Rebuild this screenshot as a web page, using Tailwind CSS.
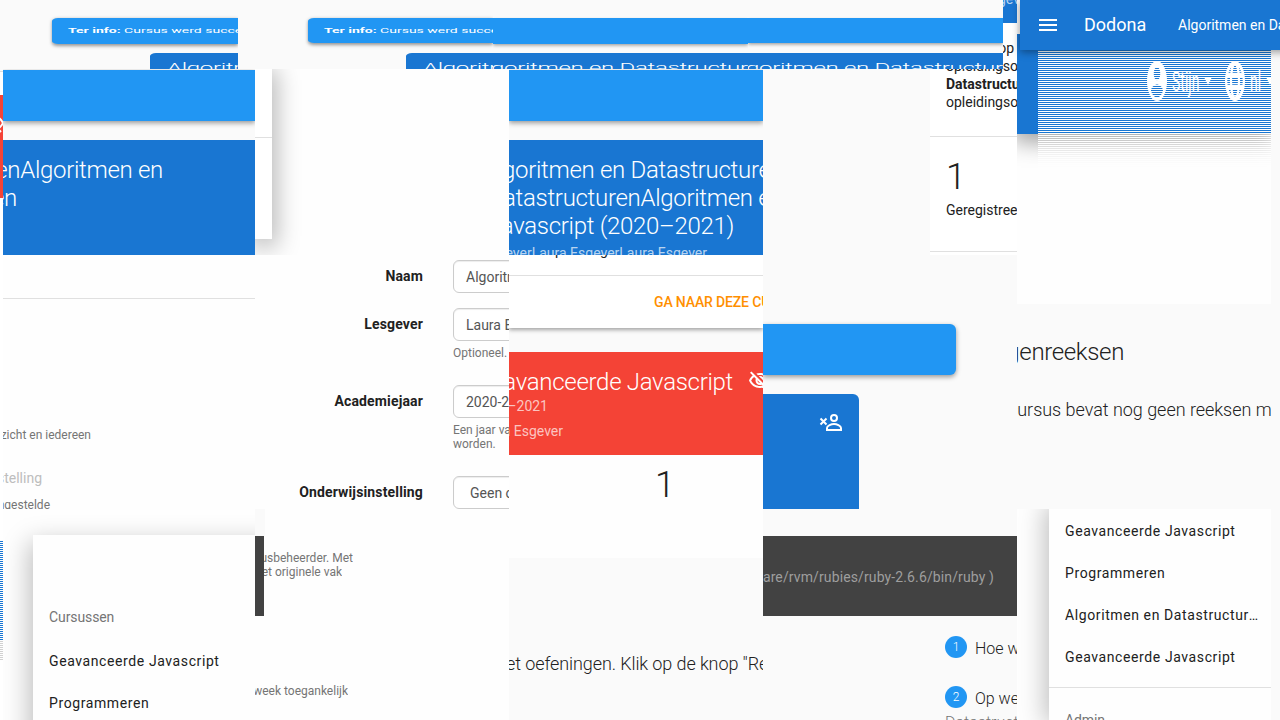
<!DOCTYPE html>
<html lang="nl">
<head>
<meta charset="utf-8">
<title>Dodona</title>
<script src="https://cdn.jsdelivr.net/npm/@tailwindcss/browser@4"></script>
</head>
<body class="bg-[#fafafa]">
<div class="relative flex h-[720px] w-[1280px] flex-col overflow-hidden bg-[#fafafa] font-['Roboto',sans-serif] text-sm leading-5 whitespace-nowrap text-[#212121]">

  <!-- Top strip: vertically compressed tiles -->
  <div class="flex h-[69px] shrink-0">
    <div class="h-[69px] w-[238px] overflow-hidden">
      <div class="h-[138px] origin-top scale-y-50 pt-9">
        <div class="ml-[52px] h-[52px] rounded-l-md bg-[#2196f3] py-[15px] pl-4 text-white shadow-[0_3px_5px_rgba(0,0,0,.4)]"><b>Ter info:</b> Cursus werd succesvol</div>
        <div class="mt-[18px] ml-[150px] h-10 rounded-tl-md bg-[#1976d2] pt-4 pl-[17px] text-2xl leading-7 font-light tracking-[-.3px] text-white">Algoritmen</div>
      </div>
    </div>
    <div class="h-[69px] w-[255px] overflow-hidden">
      <div class="h-[138px] origin-top scale-y-50 pt-9">
        <div class="ml-[70px] h-[50px] rounded-l-md bg-[#2196f3] py-[15px] pl-4 text-white shadow-[0_3px_5px_rgba(0,0,0,.4)]"><b>Ter info:</b> Cursus werd succesvol</div>
        <div class="mt-5 ml-[168px] h-10 rounded-tl-md bg-[#1976d2] pt-4 pl-[17px] text-2xl leading-7 font-light tracking-[-.3px] text-white">Algoritmen</div>
      </div>
    </div>
    <div class="h-[69px] w-[255px] overflow-hidden">
      <div class="h-[138px] origin-top scale-y-50 pt-9">
        <div class="h-[52px] bg-[#2196f3] shadow-[0_3px_5px_rgba(0,0,0,.4)]"></div>
        <div class="mt-[18px] h-10 bg-[#1976d2] pt-4 text-2xl leading-7 font-light tracking-[-.3px] text-white"><span class="-ml-0.5">goritmen en Datastructuren</span></div>
      </div>
    </div>
    <div class="h-[69px] w-[255px] overflow-hidden">
      <div class="h-[138px] origin-top scale-y-50 pt-9">
        <div class="h-[50px] bg-[#2196f3] shadow-[0_3px_5px_rgba(0,0,0,.4)]"></div>
        <div class="mt-5 h-10 bg-[#1976d2] pt-4 text-2xl leading-7 font-light tracking-[-.3px] text-white"><span class="-ml-0.5">goritmen en Datastructuren</span></div>
      </div>
    </div>
    <div class="flex h-[69px] w-[14px] flex-col items-end overflow-hidden bg-white">
      <div class="flex h-[23px] w-full shrink-0 justify-end overflow-hidden bg-[#1976d2] text-white/70"><span class="-mt-[11px] -mr-[3px]">Esgev</span></div>
      <div class="mt-4 shrink-0 pr-[3px] leading-[18px]">op</div>
      <div class="-mr-px shrink-0 leading-[18px]">opleidingso</div>
    </div>
  </div>

  <!-- Main mosaic -->
  <div class="grid h-[651px] shrink-0 grid-cols-[3px_252px_254px_254px_254px_254px_9px] grid-rows-[186px_254px_211px]">

    <!-- Row 1 -->
    <div class="overflow-hidden bg-white">
      <div class="h-[3px] border-b border-[#ddd] bg-[#fafafa]"></div>
      <div class="mt-[23px] h-[103px] bg-[#f44336] pt-[16px]">
        <svg class="-ml-5 h-6 w-6" viewBox="0 0 24 24" fill="none" stroke="#fff" stroke-width="2"><path d="M12 5C7 5 3 8 1 12c2 4 6 7 11 7s9-3 11-7c-2-4-6-7-11-7zM3 3l18 18"/></svg>
      </div>
    </div>
    <div class="overflow-hidden bg-[#fafafa] pt-px">
      <div class="h-[51px] bg-[#2196f3] shadow-[0_2px_5px_rgba(0,0,0,.4)]"></div>
      <div class="mt-[19px] flex h-[115px] flex-col items-start bg-[#1976d2] pt-4 text-2xl leading-7 font-light tracking-[-.3px] text-white">
        <div class="flex w-[160px] justify-end">DatastructurenAlgoritmen en</div>
        <div class="flex w-[14px] justify-end">Datastructuren</div>
      </div>
    </div>
    <div class="overflow-hidden bg-[#fefefe]">
      <div class="h-[170px] w-[17px] bg-white pt-[68px] shadow-[0_4px_24px_4px_rgba(0,0,0,.3)]"><div class="h-px bg-[#e0e0e0]"></div></div>
    </div>
    <div class="overflow-hidden bg-[#fafafa] pt-px">
      <div class="h-[51px] bg-[#2196f3] shadow-[0_2px_5px_rgba(0,0,0,.4)]"></div>
      <div class="mt-[19px] h-[115px] bg-[#1976d2] pt-4 text-2xl leading-7 font-light tracking-[-.3px] text-white">
        <div class="-ml-[7px]">goritmen en Datastructuren</div>
        <div class="-ml-[6px]">atastructurenAlgoritmen en</div>
        <div class="flex w-[225px] justify-end">Javascript (2020–2021)</div>
        <div class="mt-[3px] flex w-[198px] justify-end text-sm leading-5 font-normal tracking-normal text-white/70">Laura EsgeverLaura EsgeverLaura Esgever</div>
      </div>
    </div>
    <div class="overflow-hidden bg-[#fafafa] pl-[167px]">
      <div class="h-[186px] overflow-hidden bg-white">
        <div class="-mt-3 h-[79px] pl-4 leading-[18px]"><div>opleidingsonderdeel</div><div class="-mt-1.5 pt-1.5 font-bold">Datastructuren</div><div>opleidingsonderdeel</div></div>
        <div class="h-px bg-[#e0e0e0]"></div>
        <div class="mt-[22px] pl-4 text-4xl leading-9 font-light">1</div>
        <div class="mt-[5px] pl-4">Geregistreerde</div>
        <div class="mt-[31px] h-px bg-[#e0e0e0]"></div>
      </div>
    </div>
    <div class="overflow-hidden bg-[#fefefe]">
      <div class="h-[65px] bg-[#1976d2] shadow-[0_3px_22px_4px_rgba(0,0,0,.4)]"></div>
    </div>
    <div></div>

    <!-- Row 2 -->
    <div class="bg-white"></div>
    <div class="overflow-hidden bg-[#fefefe] pt-[43px]">
      <div class="h-px bg-[#e0e0e0]"></div>
      <div class="mt-[129px] flex w-[88px] justify-end text-xs leading-[14px] text-[#757575]">overzicht en iedereen</div>
      <div class="mt-[26px] flex w-[39px] justify-end text-[#bdbdbd]">instelling</div>
      <div class="mt-[10px] flex w-[47px] justify-end text-xs leading-[14px] text-[#757575]">ingestelde</div>
    </div>
    <div class="overflow-hidden bg-[#fefefe] pt-[5px] text-[#555]">
      <div class="flex gap-[30px]"><b class="w-[168px] shrink-0 pt-1.5 text-right tracking-[.15px] text-[#212121]">Naam</b><div class="h-[33px] w-40 shrink-0 rounded-md border border-[#ccc] bg-white px-3 pt-1.5 shadow-[inset_0_1px_1px_rgba(0,0,0,.075)]">Algoritmen</div></div>
      <div class="mt-[15px] flex gap-[30px]"><b class="w-[168px] shrink-0 pt-1.5 text-right tracking-[.15px] text-[#212121]">Lesgever</b><div class="h-[33px] w-40 shrink-0 rounded-md border border-[#ccc] bg-white px-3 pt-1.5 shadow-[inset_0_1px_1px_rgba(0,0,0,.075)]">Laura Esgever</div></div>
      <div class="mt-[5px] ml-[198px] text-xs leading-[14px] text-[#757575]">Optioneel.</div>
      <div class="mt-[25px] flex gap-[30px]"><b class="w-[168px] shrink-0 pt-1.5 text-right tracking-[.15px] text-[#212121]">Academiejaar</b><div class="h-[33px] w-40 shrink-0 rounded-md border border-[#ccc] bg-white px-3 pt-1.5 shadow-[inset_0_1px_1px_rgba(0,0,0,.075)]">2020-2021</div></div>
      <div class="mt-[5px] ml-[198px] text-xs leading-[14px] text-[#757575]">Een jaar van<br>worden.</div>
      <div class="mt-[25px] flex gap-[30px]"><b class="w-[168px] shrink-0 pt-1.5 text-right tracking-[.15px] text-[#212121]">Onderwijsinstelling</b><div class="h-[33px] w-40 shrink-0 rounded-md border border-[#ccc] bg-white px-4 pt-1.5 shadow-[inset_0_1px_1px_rgba(0,0,0,.075)]">Geen onderwijs</div></div>
    </div>
    <div class="overflow-hidden bg-[#fafafa]">
      <div class="h-[73px] bg-white shadow-[0_2px_4px_rgba(0,0,0,.35)]">
        <div class="flex h-5 overflow-hidden pl-[46px]"><span class="-mt-[15px]">p</span><span class="-mt-[15px] ml-[37px]">g</span></div>
        <div class="h-px bg-[#e0e0e0]"></div>
        <div class="mt-4 ml-[145px] font-medium tracking-[-.15px] text-[#ff8f00]">GA NAAR DEZE CURSUS</div>
      </div>
      <div class="mt-6 h-[103px] bg-[#f44336] pt-4 text-white/70">
        <div class="flex text-2xl leading-7 font-light tracking-[-.3px] text-white"><div class="flex w-[224px] shrink-0 justify-end">Geavanceerde Javascript</div>
          <svg class="mt-px ml-[15px] h-6 w-6 shrink-0" viewBox="0 0 24 24" fill="#fff"><path d="M12 6c3.790 0 7.170 2.130 8.820 5.500-.590 1.220-1.420 2.270-2.410 3.120l1.410 1.410c1.390-1.230 2.490-2.770 3.180-4.530C21.270 7.110 17 4 12 4c-1.270 0-2.490.2-3.640.570l1.650 1.650C10.660 6.090 11.320 6 12 6zm-1.070 1.140L13 9.210c.570.250 1.030.710 1.280 1.280l2.070 2.070c.080-.340.140-.7.140-1.070C16.500 9.010 14.480 7 12 7c-.370 0-.720.050-1.070.140zM2.010 3.870l2.680 2.680C3.060 7.830 1.770 9.530 1 11.500 2.730 15.890 7 19 12 19c1.520 0 2.980-.290 4.320-.820l3.420 3.420 1.410-1.410L3.420 2.450 2.010 3.870zm7.500 7.500l2.610 2.610c-.040.010-.080.020-.120.020-1.380 0-2.500-1.120-2.500-2.500 0-.050.010-.080.010-.130zm-3.400-3.400l1.750 1.750c-.230.550-.360 1.150-.360 1.780 0 2.480 2.020 4.500 4.500 4.500.630 0 1.230-.130 1.770-.360l.980.980c-.880.240-1.800.380-2.750.380-3.790 0-7.170-2.130-8.820-5.500.7-1.430 1.720-2.610 2.930-3.530z"/></svg></div>
        <div class="flex w-[39px] justify-end">2020–2021</div>
        <div class="mt-[5px] flex w-[54px] justify-end">Laura Esgever</div>
      </div>
      <div class="h-[54px] bg-[#fefefe] pt-3 pl-[146px] text-4xl leading-9 font-light">1</div>
    </div>
    <div class="overflow-hidden bg-[#fafafa] pt-[69px]">
      <div class="h-[51px] w-[193px] rounded-r-md bg-[#2196f3] shadow-[0_2px_5px_rgba(0,0,0,.4)]"></div>
      <div class="mt-[19px] h-[115px] w-24 rounded-tr-md bg-[#1976d2] pt-[17px] pl-14">
        <svg class="h-6 w-6" viewBox="0 0 24 24" fill="none" stroke="#fff" stroke-width="2"><path d="M1.500 7.500l6 6m0-6l-6 6"/><circle cx="15" cy="7" r="3"/><path d="M8 19v-2c0-2.500 4.500-4 7-4s7 1.500 7 4v2z"/></svg>
      </div>
    </div>
    <div class="overflow-hidden bg-[#fafafa] font-light">
      <div class="h-[49px] bg-[#fefefe]"></div>
      <div class="mt-[34px] flex w-[107px] justify-end text-2xl leading-7 tracking-[-.35px]">Oefeningenreeksen</div>
      <div class="mt-8 -ml-[9px] text-lg leading-6 tracking-[-.03px]">cursus bevat nog geen reeksen met</div>
    </div>
    <div></div>

    <!-- Row 3 -->
    <div class="overflow-hidden bg-white pt-8">
      <div class="h-[100px] bg-[repeating-linear-gradient(to_bottom,#1976d2_0_1px,#fff_1px_2px)]"></div>
      <div class="h-5 bg-[repeating-linear-gradient(to_bottom,#d0d0d0_0_1px,#fff_1px_2px)]"></div>
    </div>
    <div class="overflow-hidden bg-[#fefefe] pt-[26px] pl-[30px]">
      <div class="h-[240px] w-[300px] bg-[#fefefe] pt-[72px] pl-4 tracking-[.6px] shadow-[0_11px_24px_4px_rgba(0,0,0,.25)]">
        <div class="tracking-[-.1px] text-[#757575]">Cursussen</div>
        <div class="mt-6">Geavanceerde Javascript</div>
        <div class="mt-[22px]">Programmeren</div>
      </div>
    </div>
    <div class="flex overflow-hidden bg-[#fefefe] text-xs leading-[14px] text-[#757575]">
      <div class="w-2.5 shrink-0 bg-[#fefefe]"><div class="h-[27px] bg-[#fafafa]"></div><div class="h-20 w-[9px] bg-[#424242]"></div></div>
      <div class="pt-[42px]">
        <div class="-ml-px flex w-[89px] justify-end overflow-hidden">cursusbeheerder. Met</div>
        <div class="-ml-px flex w-[78px] justify-end overflow-hidden">het originele vak</div>
        <div class="mt-[105px] -ml-2.5 flex w-[93px] justify-end overflow-hidden">week toegankelijk</div>
      </div>
    </div>
    <div class="overflow-hidden bg-[#fafafa]">
      <div class="h-[49px] bg-[#fefefe]"></div>
      <div class="mt-[94px] -ml-[3px] text-lg leading-6 font-light tracking-[-.1px]">et oefeningen. Klik op de knop "Reeks</div>
    </div>
    <div class="overflow-hidden bg-[#fafafa] pt-[27px]">
      <div class="h-20 bg-[#424242] pt-[31px] text-[#9e9e9e]"><div class="flex w-[231px] justify-end overflow-hidden tracking-[.12px]">are/rvm/rubies/ruby-2.6.6/bin/ruby )</div></div>
      <div class="mt-5 ml-[182px] flex gap-2 text-base leading-6 font-light"><span class="h-[22px] w-[22px] shrink-0 rounded-full bg-[#2196f3] text-center text-xs leading-[22px] text-white">1</span><span class="pt-px">Hoe werkt</span></div>
      <div class="mt-[25px] ml-[182px] flex gap-2 text-base leading-6 font-light"><span class="h-[22px] w-[22px] shrink-0 rounded-full bg-[#2196f3] text-center text-xs leading-[22px] text-white">2</span><span class="pt-px">Op welke</span></div>
      <div class="ml-[182px] text-base leading-6 font-light text-[#757575]">Datastructuren</div>
    </div>
    <div class="overflow-hidden bg-[#fefefe] pl-8">
      <div class="h-[211px] bg-[#fefefe] pt-3 tracking-[.6px] shadow-[0_0_24px_4px_rgba(0,0,0,.25)]">
        <div class="flex flex-col gap-[22px] pl-4"><div>Geavanceerde Javascript</div><div>Programmeren</div><div class="w-[196px] truncate">Algoritmen en Datastructuren</div><div>Geavanceerde Javascript</div></div>
        <div class="mt-5 h-px bg-[#e0e0e0]"></div>
        <div class="mt-[22px] pl-4 tracking-[-.1px] text-[#757575]">Admin</div>
      </div>
    </div>
    <div></div>
  </div>

  <!-- Stretched navigation bar: solid edge on the left, every other row blank on the right -->
  <div class="absolute top-[34px] left-[1017px] h-[100px] w-[21px] bg-[#1976d2]"></div>
  <div class="absolute top-[50px] left-[1038px] h-5 w-[233px] bg-[#1976d2]"></div>
  <div class="absolute top-[61px] left-[1147px] flex h-5 w-[124px] origin-top scale-y-200 items-center overflow-hidden text-white">
    <svg class="h-5 w-5 shrink-0" viewBox="2 2 20 20" fill="#fff"><path fill-rule="evenodd" d="M12 2a10 10 0 100 20 10 10 0 000-20zM12 5a3.300 3.300 0 110 6.600 3.300 3.300 0 010-6.600zM6 17c0-2 4-3.200 6-3.200s6 1.200 6 3.200c-1.300 2-3.500 3.200-6 3.200S7.300 19 6 17z"/></svg>
    <span class="ml-[5px] w-[26px] shrink-0">Stijn</span>
    <svg class="ml-1.5 h-1 w-2 shrink-0" viewBox="0 0 8 4" fill="#fff"><path d="M0 0h8L4 4z"/></svg>
    <svg class="ml-[13px] h-5 w-5 shrink-0" viewBox="2 2 20 20" fill="none" stroke="#fff" stroke-width="2.200"><circle cx="12" cy="12" r="8.900"/><ellipse cx="12" cy="12" rx="4" ry="9"/><path d="M3.500 9h17M3.500 15h17"/></svg>
    <span class="ml-[5px] w-3 shrink-0">nl</span>
    <svg class="ml-1 h-1 w-2 shrink-0" viewBox="0 0 8 4" fill="#fff"><path d="M0 0h8L4 4z"/></svg>
  </div>
  <div class="absolute top-[50px] left-[1038px] h-[120px] w-[233px] bg-[repeating-linear-gradient(to_bottom,transparent_0_1px,#fefefe_1px_2px)]"></div>

  <!-- Floating app bar -->
  <div class="absolute top-0 left-[1020px] flex h-[50px] w-[270px] items-center bg-[#1976d2] pl-4 text-white shadow-[0_2px_8px_rgba(0,0,0,.4)]">
    <svg class="h-6 w-6 shrink-0" viewBox="0 0 24 24" fill="#fff"><path d="M3 18h18v-2H3v2zm0-5h18v-2H3v2zm0-7v2h18V6H3z"/></svg>
    <span class="ml-6 w-[94px] shrink-0 text-lg leading-6">Dodona</span>
    <span>Algoritmen en Datastructuren</span>
  </div>
</div>
</body>
</html>
